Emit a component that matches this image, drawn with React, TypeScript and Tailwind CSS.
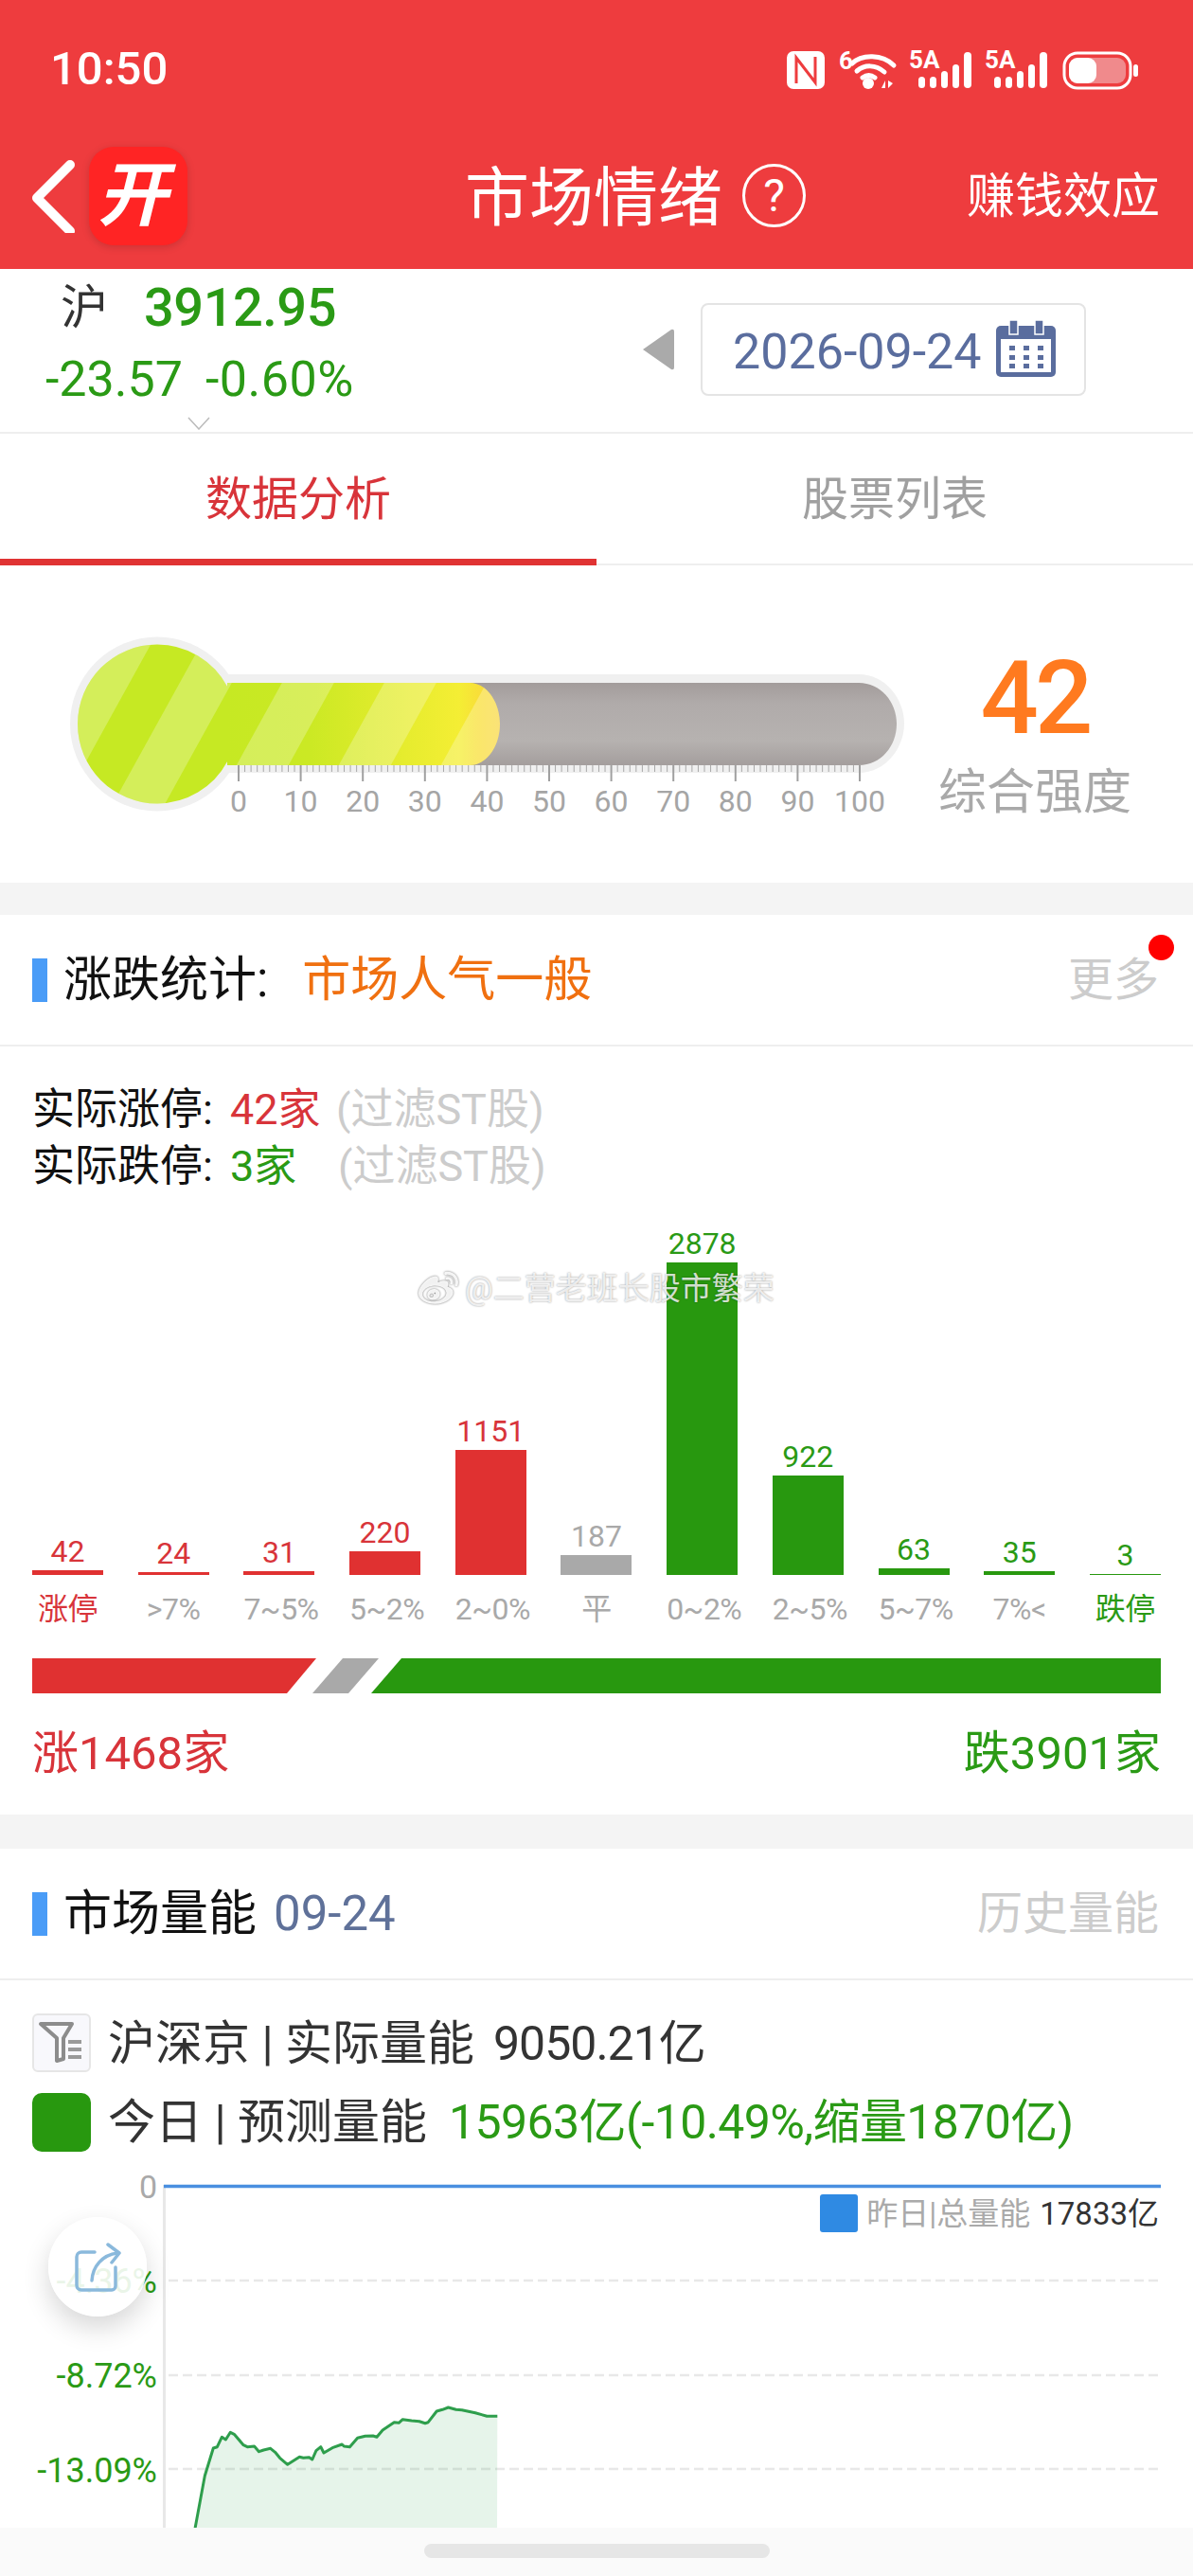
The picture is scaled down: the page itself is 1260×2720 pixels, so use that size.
import { FaWeibo } from 'react-icons/fa';

const red = 'text-[#d8343a]';
const green = 'text-[#2a9a15]';
const grey = 'text-[#a9a9a9]';

const bars = [
  { v: 42, h: 5, label: '涨停', c: 'bg-[#e03131]', t: red, l: red },
  { v: 24, h: 3, label: '>7%', c: 'bg-[#e03131]', t: red, l: grey },
  { v: 31, h: 4, label: '7~5%', c: 'bg-[#e03131]', t: red, l: grey },
  { v: 220, h: 25, label: '5~2%', c: 'bg-[#e03131]', t: red, l: grey },
  { v: 1151, h: 132, label: '2~0%', c: 'bg-[#e03131]', t: red, l: grey },
  { v: 187, h: 21, label: '平', c: 'bg-[#a9a9a9]', t: grey, l: grey },
  { v: 2878, h: 330, label: '0~2%', c: 'bg-[#28980f]', t: green, l: grey },
  { v: 922, h: 105, label: '2~5%', c: 'bg-[#28980f]', t: green, l: grey },
  { v: 63, h: 7, label: '5~7%', c: 'bg-[#28980f]', t: green, l: grey },
  { v: 35, h: 4, label: '7%<', c: 'bg-[#28980f]', t: green, l: grey },
  { v: 3, h: 1, label: '跌停', c: 'bg-[#28980f]', t: green, l: green },
];

// traced from the reference, zoom coordinates -> page x/2.45, 2260+y/3
const lineRaw = [
  [505, 1225], [530, 1060], [552, 972], [562, 968], [574, 937], [584, 945], [596, 922], [606, 928], [630, 962],
  [640, 968], [658, 966], [670, 983], [682, 978], [700, 973], [712, 985], [724, 1003], [744, 1024], [775, 1000],
  [785, 1003], [800, 1001], [808, 1008], [818, 980], [830, 968], [838, 987], [860, 971], [885, 960], [890, 966],
  [905, 968], [925, 940], [945, 934], [965, 933], [975, 937], [990, 915], [1020, 890], [1032, 892], [1042, 881],
  [1065, 885], [1085, 887], [1100, 893], [1108, 890], [1130, 855], [1145, 850], [1160, 843], [1180, 850],
  [1195, 851], [1230, 860], [1260, 871], [1287, 871],
];
const linePts = lineRaw.map(([x, y]) => `${(x / 2.45).toFixed(1)},${(2260 + y / 3).toFixed(1)}`).join(' ');

function StatusIcons() {
  const signal = (x: number) => (
    <g fill="#fff">
      <text x={x} y={72} fontSize={26} fontWeight={700}>5A</text>
      <rect x={x + 10} y={81} width={7} height={12} rx={3.5} />
      <rect x={x + 22} y={81} width={7} height={12} rx={3.5} />
      <rect x={x + 34} y={75} width={7} height={18} rx={3.5} />
      <rect x={x + 46} y={68} width={7} height={25} rx={3.5} />
      <rect x={x + 58} y={55} width={8} height={38} rx={4} />
    </g>
  );
  return (
    <svg width={385} height={68} viewBox="825 40 385 68" className="-mt-[10px]">
      <rect x={831} y={54} width={40} height={40} rx={7} fill="#fff" />
      <path d="M841 88V61l20 26V60" fill="none" stroke="#ee3c3e" strokeWidth={3} />
      <text x={886} y={73} fontSize={26} fontWeight={700} fill="#fff">6</text>
      <g fill="none" stroke="#fff" strokeWidth={5} strokeLinecap="round">
        <path d="M900 67c10-10 32-10 44 2" />
        <path d="M905 75c8-7 20-7 29 1" />
        <path d="M911 82c4-3 9-3 13 0" />
      </g>
      <circle cx={917} cy={88} r={6} fill="#fff" />
      <path d="M931 93l4-8v8zM938 85v8l5-5z" fill="#fff" />
      {signal(960)}
      {signal(1040)}
      <rect x={1124} y={56} width={70} height={37} rx={14} fill="none" stroke="#fff" strokeWidth={3} />
      <rect x={1129} y={61} width={60} height={27} rx={9} fill="#f08a8c" />
      <rect x={1129} y={61} width={29} height={27} rx={9} fill="#fff" />
      <rect x={1197} y={68} width={5} height={13} rx={2.5} fill="#fff" />
    </svg>
  );
}

function Calendar() {
  return (
    <svg width={63} height={60} viewBox="0 0 63 60" className="ml-[15px] mt-[-3px]">
      <rect x={0} y={6} width={63} height={54} rx={5} fill="#5a6d9e" />
      <rect x={5} y={20} width={53} height={35} fill="#fff" />
      <rect x={14} y={0} width={9} height={15} fill="#5a6d9e" stroke="#fff" strokeWidth={1.5} />
      <rect x={41} y={0} width={9} height={15} fill="#5a6d9e" stroke="#fff" strokeWidth={1.5} />
      {[14, 29, 44].map((x) =>
        [27, 37, 46].map((y) => <rect key={`${x}-${y}`} x={x} y={y} width={6} height={5} fill="#5a6d9e" />),
      )}
    </svg>
  );
}

function Thermometer() {
  const stripes = [-74, 34, 142, 250, 358, 466];
  const ticks = Array.from({ length: 101 }, (_, i) => i);
  return (
    <svg width={960} height={335} viewBox="0 597 960 335" className="shrink-0">
      <defs>
        <linearGradient id="tube" x1="0" y1="0" x2="0" y2="1">
          <stop offset="0" stopColor="#a39c9b" />
          <stop offset="0.25" stopColor="#b0abaa" />
          <stop offset="0.7" stopColor="#b6b2b0" />
          <stop offset="1" stopColor="#a49e9d" />
        </linearGradient>
        <linearGradient id="fill" gradientUnits="userSpaceOnUse" x1="240" y1="0" x2="528" y2="0">
          <stop offset="0" stopColor="#c6e923" />
          <stop offset="0.3" stopColor="#cbe924" />
          <stop offset="0.65" stopColor="#e6ec2e" />
          <stop offset="0.85" stopColor="#f4ee34" />
          <stop offset="0.92" stopColor="#f8df38" />
          <stop offset="1" stopColor="#f8d94a" />
        </linearGradient>
        <clipPath id="mercury">
          <circle cx={166} cy={764.5} r={84} />
          <path d="M240 721H496C514 721 528 741 528 764.5S514 808 496 808H240Z" />
        </clipPath>
      </defs>
      <circle cx={166} cy={764.5} r={92} fill="#f0f0f0" />
      <path d="M200 712H907C935 712 955 738 955 764S935 816 907 816H200Z" fill="#f0f0f0" />
      <path d="M240 721H907C930 721 947 741 947 764.5S930 808 907 808H240Z" fill="url(#tube)" />
      <g clipPath="url(#mercury)">
        <rect x={70} y={670} width={470} height={190} fill="url(#fill)" />
        {stripes.map((x) => (
          <polygon
            key={x}
            points={`${x + 76},670 ${x + 131},670 ${x + 26},860 ${x - 29},860`}
            fill="#fff"
            fillOpacity={0.25}
          />
        ))}
      </g>
      {ticks.map((i) => {
        const x = 252 + i * 6.56;
        const major = i % 10 === 0;
        return (
          <line
            key={i}
            x1={x}
            x2={x}
            y1={808}
            y2={major ? 825 : 815}
            stroke={major ? '#a0a0a0' : '#a8a8a8'}
            strokeWidth={major ? 2 : 1}
          />
        );
      })}
      {ticks
        .filter((i) => i % 10 === 0)
        .map((i) => (
          <text key={i} x={252 + i * 6.56} y={857} fontSize={32} fill="#a5a5a5" textAnchor="middle">
            {i}
          </text>
        ))}
    </svg>
  );
}

function SectionHead({ children, right, dot }: { children: React.ReactNode; right: string; dot?: boolean }) {
  return (
    <div className="relative flex h-[139px] items-center border-b-2 border-[#eeeeee] pl-[34px] pr-[36px]">
      <span className="h-[46px] w-[16px] bg-[#4a9cf7]" />
      <div className="ml-[17px] flex flex-1 items-center text-[51px] leading-none text-[#111]">{children}</div>
      <span className="text-[48px] leading-none text-[#cccccc]">{right}</span>
      {dot && <span className="absolute right-[20px] top-[21px] h-[27px] w-[27px] rounded-full bg-[#ff0000]" />}
    </div>
  );
}

function FilterIcon() {
  return (
    <div className="flex h-[62px] w-[62px] items-center justify-center rounded-[6px] border-2 border-[#e6e6e6] bg-[#f8f8fc]">
      <svg width={50} height={46} viewBox="0 0 50 46">
        <path d="M3 3H36L27 18V40L20 42V18Z" fill="none" stroke="#8c8c8c" strokeWidth={4} strokeLinejoin="round" />
        <path d="M32 22H46M32 30H46M32 38H46" stroke="#9a9a9a" strokeWidth={4} />
      </svg>
    </div>
  );
}

function VolumeChart() {
  const dashes = [2407, 2507, 2606];
  return (
    <div className="relative h-[397px]">
      <svg width={1260} height={397} viewBox="0 2271 1260 397" className="block">
        <line x1={173.5} x2={173.5} y1={2306} y2={2668} stroke="#e8e8e8" strokeWidth={3} />
        <line x1={173} x2={1226} y1={2307.5} y2={2307.5} stroke="#4a8fe0" strokeWidth={3.5} />
        {dashes.map((y) => (
          <line key={y} x1={178} x2={1223} y1={y} y2={y} stroke="#e8e8e8" strokeWidth={2.5} strokeDasharray="10 5" />
        ))}
        <polygon points={`${linePts} 525,2668 206,2668`} fill="#2fa84f" fillOpacity={0.12} />
        <polyline points={linePts} fill="none" stroke="#2e9e4c" strokeWidth={3} strokeLinejoin="round" />
        <text x={166} y={2320} fontSize={34} fill="#a9a9a9" textAnchor="end">0</text>
        <text x={166} y={2420} fontSize={36} fill="#2a9a15" textAnchor="end">-4.36%</text>
        <text x={166} y={2520} fontSize={36} fill="#2a9a15" textAnchor="end">-8.72%</text>
        <text x={166} y={2620} fontSize={36} fill="#2a9a15" textAnchor="end">-13.09%</text>
      </svg>
      <div className="absolute right-[36px] top-[45px] flex items-center text-[33px] leading-none">
        <span className="h-[40px] w-[40px] rounded-[3px] bg-[#2f8ae3]" />
        <span className="ml-[9px] text-[#aaaaaa]">昨日|总量能</span>
        <span className="ml-[10px] text-[#333333]">17833亿</span>
      </div>
      <div className="absolute left-[51px] top-[69px] flex h-[105px] w-[104px] items-center justify-center rounded-full bg-white/90 shadow-[0_12px_28px_rgba(0,0,0,0.16)]">
        <svg width={50} height={52} viewBox="0 0 50 52" fill="none" stroke="#8ab9dc" strokeWidth={3.5} strokeLinecap="round" strokeLinejoin="round">
          <path d="M22 10H8a5 5 0 0 0-5 5V45a5 5 0 0 0 5 5H40a4 4 0 0 0 4-4V26" />
          <path d="M19 40C20 25 30 13 46 11" />
          <path d="M36 2L48 11L40 21" />
        </svg>
      </div>
    </div>
  );
}

export default function App() {
  return (
    <div
      className="relative h-[2720px] w-[1260px] overflow-hidden bg-white"
      style={{ fontFamily: 'Roboto, "Noto Sans CJK SC", sans-serif' }}
    >
      {/* red header */}
      <div className="h-[284px] bg-[#ee3c3e] text-white">
        <div className="flex h-[146px] items-start justify-between pl-[53px] pr-[50px] pt-[50px]">
          <span className="text-[49px] font-medium leading-[46px]">10:50</span>
          <StatusIcons />
        </div>
        <div className="relative flex h-[138px] items-start">
          <svg width={60} height={80} viewBox="0 0 60 80" className="ml-[28px] mt-[20px]">
            <path d="M46 8L11 43L46 78" fill="none" stroke="#fff" strokeWidth={10} strokeLinecap="round" strokeLinejoin="round" />
          </svg>
          <div className="ml-[6px] mt-[9px] flex h-[104px] w-[104px] items-center justify-center rounded-[26px] bg-[#ff2424] shadow-[0_2px_8px_rgba(0,0,0,0.15)]">
            <span className="-skew-x-[14deg] text-[74px] font-bold leading-none">开</span>
          </div>
          <span className="ml-[293px] mt-[26px] text-[68px] leading-[76px]">市场情绪</span>
          <div className="ml-[21px] mt-[27px] flex h-[67px] w-[67px] items-center justify-center rounded-full border-[3px] border-white text-[48px] leading-none">
            ?
          </div>
          <span className="absolute right-[35px] top-[32px] text-[51px] leading-[60px]">赚钱效应</span>
        </div>
      </div>

      {/* quote row */}
      <div className="relative flex h-[174px] border-b-2 border-[#eeeeee]">
        <div className="w-[677px]">
          <div className="flex h-[76px] items-center pl-[64px] pt-[5px]">
            <span className="text-[50px] leading-none text-[#333333]">沪</span>
            <span className={`ml-[38px] text-[56px] font-medium leading-none tracking-[-0.5px] ${green}`}>3912.95</span>
          </div>
          <div className={`flex h-[80px] items-center pl-[48px] pt-[2px] text-[52px] leading-none ${green}`}>
            <span>-23.57</span>
            <span className="ml-[24px] tracking-[0.5px]">-0.60%</span>
          </div>
          <svg width={24} height={14} viewBox="0 0 24 14" className="ml-[198px] block">
            <path d="M1 1L12 13L23 1" fill="none" stroke="#bbbbbb" strokeWidth={1.5} />
          </svg>
        </div>
        <svg width={36} height={44} viewBox="0 0 36 44" className="mt-[63px]">
          <path d="M2 22L32 1Q35 0 35 3V41Q35 44 32 43Z" fill="#aaaaaa" />
        </svg>
        <div className="ml-[27px] mt-[36px] flex h-[98px] w-[407px] items-center rounded-[8px] border-2 border-[#e4e4e4] pl-[32px]">
          <span className="mt-[6px] text-[52px] leading-none text-[#5a6d9e]">2026-09-24</span>
          <Calendar />
        </div>
      </div>

      {/* tabs */}
      <div className="flex h-[139px] border-b-2 border-[#eeeeee] text-[49px] leading-none">
        <div className={`relative flex w-[630px] items-center justify-center pt-[1px] ${red}`}>
          数据分析
          <span className="absolute bottom-[-2px] left-0 h-[7px] w-full bg-[#e03333]" />
        </div>
        <div className="flex w-[630px] items-center justify-center pt-[1px] text-[#a0a0a0]">股票列表</div>
      </div>

      {/* gauge */}
      <div className="flex h-[335px]">
        <Thermometer />
        <div className="-ml-[17px] flex w-[300px] flex-col items-center">
          <span className="mt-[90px] text-[108px] font-medium leading-[100px] tracking-[-4px] text-[#ff7a1f]">42</span>
          <span className="mt-[20px] text-[51px] leading-[60px] text-[#a9a9a9]">综合强度</span>
        </div>
      </div>

      <div className="h-[34px] bg-[#f4f4f4]" />

      {/* rise/fall stats */}
      <SectionHead right="更多" dot>
        涨跌统计:
        <span className="ml-[36px] text-[#f07010]">市场人气一般</span>
      </SectionHead>
      <div className="h-[811px] px-[34px]">
        <div className="pt-[37px] text-[45px] leading-[60px] text-[#111]">
          <div className="flex">
            <span className="w-[209px]">实际涨停:</span>
            <span className={`w-[112px] ${red}`}>42家</span>
            <span className="text-[#cccccc]">(过滤ST股)</span>
          </div>
          <div className="flex">
            <span className="w-[209px]">实际跌停:</span>
            <span className={`w-[114px] ${green}`}>3家</span>
            <span className="text-[#cccccc]">(过滤ST股)</span>
          </div>
        </div>
        <div className="flex h-[401px] items-end justify-between">
          {bars.map((b) => (
            <div key={b.label} className="flex w-[75px] flex-col items-center">
              <span className={`mb-[2px] text-[32px] leading-[36px] ${b.t}`}>{b.v}</span>
              <div className={`w-full ${b.c}`} style={{ height: b.h }} />
            </div>
          ))}
        </div>
        <div className="mt-[16px] flex justify-between">
          {bars.map((b) => (
            <span key={b.label} className={`w-[75px] whitespace-nowrap text-center text-[32px] leading-[40px] tracking-[-0.5px] ${b.l}`}>
              {b.label}
            </span>
          ))}
        </div>
        <svg width={1192} height={37} viewBox="34 1751 1192 37" className="mt-[32px] block">
          <polygon points="34,1751 334,1751 303,1788 34,1788" fill="#e03131" />
          <polygon points="362,1751 400,1751 368,1788 330,1788" fill="#a9a9a9" />
          <polygon points="424,1751 1226,1751 1226,1788 392,1788" fill="#28980f" />
        </svg>
        <div className="mt-[40px] flex justify-between text-[49px] leading-[48px]">
          <span className={red}>涨1468家</span>
          <span className={green}>跌3901家</span>
        </div>
      </div>

      <div className="h-[36px] bg-[#f4f4f4]" />

      {/* market volume */}
      <SectionHead right="历史量能">
        市场量能
        <span className="ml-[18px] text-[#5f7199]">09-24</span>
      </SectionHead>
      <div className="px-[34px] pt-[35px] text-[50px] leading-[62px] text-[#333333]">
        <div className="flex h-[62px] items-center">
          <FilterIcon />
          <span className="ml-[18px] pt-[2px]">沪深京 | 实际量能</span>
          <span className="ml-[20px] pt-[2px] tracking-[-1px]">9050.21亿</span>
        </div>
        <div className="mt-[22px] flex h-[62px] items-center">
          <span className="h-[62px] w-[62px] rounded-[10px] bg-[#28980f]" />
          <span className="ml-[18px]">今日 | 预测量能</span>
          <span className={`ml-[23px] tracking-[-0.6px] ${green}`}>15963亿(-10.49%,缩量1870亿)</span>
        </div>
      </div>
      <VolumeChart />

      {/* gesture bar */}
      <div className="flex h-[52px] justify-center bg-[#fafafa] pt-[17px]">
        <span className="h-[15px] w-[365px] rounded-full bg-[#e6e6e6]" />
      </div>

      {/* watermark */}
      <div className="absolute left-[440px] top-[1340px] flex items-center whitespace-nowrap text-[33px] leading-[38px] text-white/80 [text-shadow:0_0_2px_rgba(0,0,0,0.45)]">
        <FaWeibo className="mr-[5px] h-[42px] w-[46px] text-white/90 drop-shadow-[0_0_1px_rgba(0,0,0,0.6)]" />
        @二营老班长股市繁荣
      </div>
    </div>
  );
}
